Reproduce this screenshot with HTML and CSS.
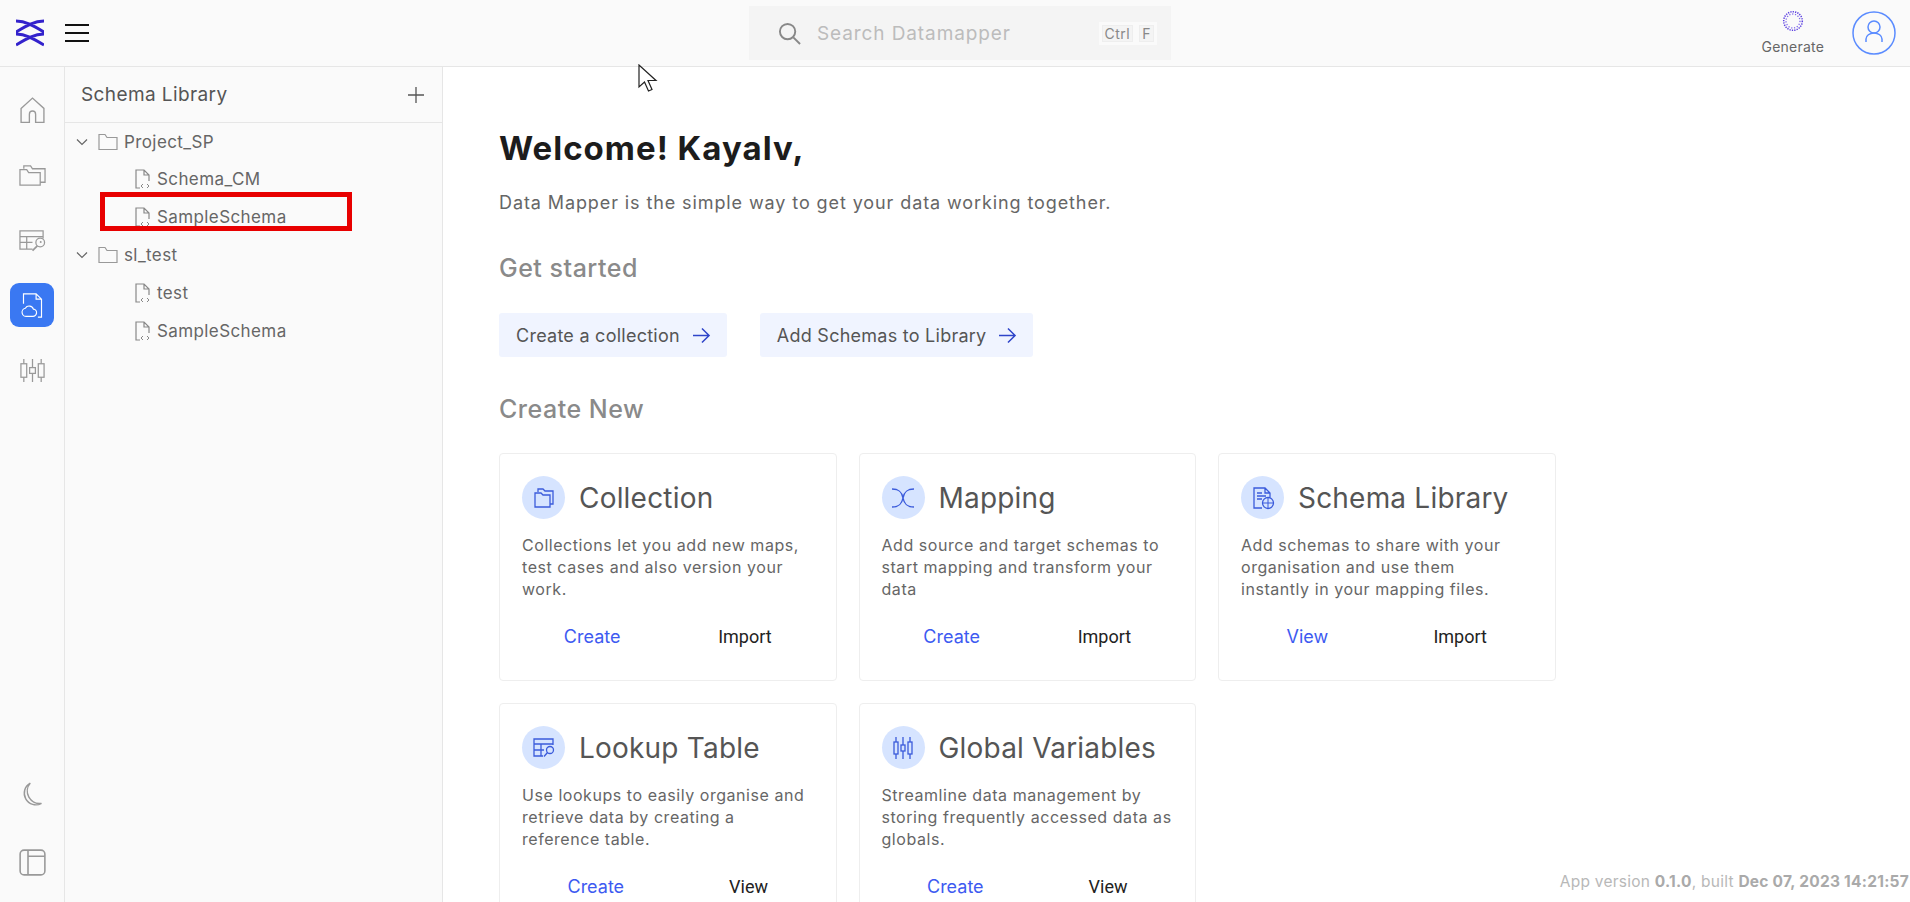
FILE: index.html
```html
<!DOCTYPE html>
<html>
<head>
  <title>Data Mapper</title>
  <link rel="stylesheet" href="styles.css">
</head>
<body>
  <svg width="0" height="0" class="defs">
    <symbol id="file-code" viewBox="0 0 18 20">
      <path d="M6 19H2V1h8l5 5v6M10 1v5h5" fill="none" stroke="currentColor" stroke-width="1.2"/>
      <path d="M9 15l-2 2 2 2M13 15l2 2-2 2" fill="none" stroke="currentColor" stroke-width="1"/>
    </symbol>
    <symbol id="folder" viewBox="0 0 20 18">
      <path d="M1 3.5V16.5H19V4.5H9L7 1.5H1z" fill="none" stroke="currentColor" stroke-width="1.2"/>
    </symbol>
    <symbol id="chevron" viewBox="0 0 12 8">
      <path d="M1 1.5l5 5 5-5" fill="none" stroke="currentColor" stroke-width="1.2"/>
    </symbol>
    <symbol id="arrow" viewBox="0 0 20 18">
      <path d="M1 9h17M10.500 1.500L18 9l-7.500 7.500" fill="none" stroke="currentColor" stroke-width="1.600"/>
    </symbol>
  </svg>

  <header class="topbar">
    <div class="topbar-left">
      <svg class="logo" viewBox="0 0 28 28">
        <path d="M0 2c10 0 18 5 28 11M28 2C18 2 10 7 0 13M0 15c10 0 18 5 28 11M28 15c-10 0-18 5-28 11" fill="none" stroke="#3322cc" stroke-width="3"/>
      </svg>
      <div class="hamburger"><span></span><span></span><span></span></div>
    </div>
    <div class="search">
      <svg class="search-icon" viewBox="0 0 24 24">
        <circle cx="10" cy="10" r="8" fill="none" stroke="#888" stroke-width="2"/>
        <path d="M16 16l7 7" stroke="#888" stroke-width="2"/>
      </svg>
      <span class="search-text">Search Datamapper</span>
      <span class="keys"><kbd>Ctrl</kbd><kbd>F</kbd></span>
    </div>
    <div class="topbar-right">
      <div class="generate">
        <svg class="generate-icon" viewBox="0 0 22 22">
          <circle cx="11" cy="11" r="9.300" fill="none" stroke="#5b3fe0" stroke-width="1.500" stroke-dasharray="1.300 1.100"/>
          <circle cx="11" cy="11" r="7" fill="none" stroke="#7d66ea" stroke-width="1.300" stroke-dasharray="1.200 1.700"/>
        </svg>
        <span>Generate</span>
      </div>
      <svg class="avatar" viewBox="0 0 44 44">
        <circle cx="22" cy="22" r="21" fill="none" stroke="#5b8cff" stroke-width="1.500"/>
        <circle cx="22" cy="16" r="6" fill="none" stroke="#5b8cff" stroke-width="1.500"/>
        <path d="M14 31v-3a8 6 0 0 1 16 0v3" fill="none" stroke="#5b8cff" stroke-width="1.500"/>
      </svg>
    </div>
  </header>

  <div class="app">
    <nav class="rail">
      <div class="rail-top">
        <a class="rail-item">
          <svg viewBox="0 0 26 26"><path d="M2 11L13 1l11 10v13.500H16V16.500a3 3 0 0 0-6 0V24.500H2z" fill="none" stroke="currentColor" stroke-width="1.300"/></svg>
        </a>
        <a class="rail-item">
          <svg viewBox="0 0 28 22"><path d="M5 4V1h7l2 3h13v14h-5M1 5h7l2 3h12v13H1z" fill="none" stroke="currentColor" stroke-width="1.300"/></svg>
        </a>
        <a class="rail-item">
          <svg viewBox="0 0 28 22"><path d="M14 20H1V1h24v8M1 7h24M1 13h13M8 7v13" fill="none" stroke="currentColor" stroke-width="1.300"/><circle cx="22" cy="13" r="4.500" fill="none" stroke="currentColor" stroke-width="1.300"/><circle cx="22.500" cy="12.500" r="1" fill="currentColor"/><path d="M19 16.500l-5 5" stroke="currentColor" stroke-width="1.800"/></svg>
        </a>
        <a class="rail-item active">
          <svg viewBox="0 0 26 30"><path d="M3 13V2h14l6 6v20h-4M17 2v6h6" fill="none" stroke="#fff" stroke-width="1.300"/><path d="M7 27h6a4 4 0 0 0 1-8 5 5 0 0 0-9-1 4.500 4.500 0 0 0 2 9z" fill="none" stroke="#fff" stroke-width="1.300"/></svg>
        </a>
        <a class="rail-item">
          <svg viewBox="0 0 28 26"><g fill="none" stroke="currentColor" stroke-width="1.300"><path d="M5 1v5M5 20v5M14 1v9M14 16v9M23 1v5M23 20v5"/><rect x="2" y="6" width="6" height="14"/><rect x="11" y="10" width="6" height="6"/><rect x="20" y="6" width="6" height="14"/></g></svg>
        </a>
      </div>
      <div class="rail-bottom">
        <a class="rail-item">
          <svg viewBox="0 0 22 24"><path d="M9 1a11 11 0 0 0 10 18A10 10 0 1 1 9 1z" fill="none" stroke="currentColor" stroke-width="1.300"/></svg>
        </a>
        <a class="rail-item">
          <svg viewBox="0 0 24 24"><rect x="1" y="1" width="22" height="22" rx="3.500" fill="none" stroke="currentColor" stroke-width="1.400"/><path d="M8 1v22M8 6.500h15" fill="none" stroke="currentColor" stroke-width="1.400"/></svg>
        </a>
      </div>
    </nav>

    <aside class="panel">
      <div class="panel-head">
        <span>Schema Library</span>
        <svg class="plus" viewBox="0 0 18 18"><path d="M9 1v16M1 9h16" stroke="#555" stroke-width="1.300"/></svg>
      </div>
      <ul class="tree">
        <li class="tree-row folder-row first-row"><svg class="chev"><use href="#chevron"/></svg><svg class="ic-folder"><use href="#folder"/></svg>Project_SP</li>
        <li class="tree-row file-row"><svg class="ic-file"><use href="#file-code"/></svg>Schema_CM</li>
        <li class="tree-row file-row"><svg class="ic-file"><use href="#file-code"/></svg>SampleSchema</li>
        <li class="tree-row folder-row"><svg class="chev"><use href="#chevron"/></svg><svg class="ic-folder"><use href="#folder"/></svg>sl_test</li>
        <li class="tree-row file-row"><svg class="ic-file"><use href="#file-code"/></svg>test</li>
        <li class="tree-row file-row"><svg class="ic-file"><use href="#file-code"/></svg>SampleSchema</li>
      </ul>
      <div class="highlight"></div>
    </aside>

    <main class="main">
      <h1>Welcome! Kayalv,</h1>
      <p class="lead">Data Mapper is the simple way to get your data working together.</p>

      <h2>Get started</h2>
      <div class="quick">
        <a class="quick-btn">Create a collection <svg><use href="#arrow"/></svg></a>
        <a class="quick-btn">Add Schemas to Library <svg><use href="#arrow"/></svg></a>
      </div>

      <h2 class="second">Create New</h2>
      <div class="cards">
        <section class="card">
          <div class="card-head">
            <span class="card-icon"><svg viewBox="0 0 24 24"><path d="M6 6V3h5l2 2h8v13h-3M3 7h6l2 2h7v12H3z" fill="none" stroke="currentColor" stroke-width="1.300"/></svg></span>
            <h3>Collection</h3>
          </div>
          <p>Collections let you add new maps, test cases and also version your work.</p>
          <div class="actions"><a class="primary">Create</a><a>Import</a></div>
        </section>
        <section class="card">
          <div class="card-head">
            <span class="card-icon"><svg viewBox="0 0 24 24"><path d="M1 3c8 0 10 4 11 9s3 9 11 9M23 3c-8 0-10 4-11 9s-3 9-11 9" fill="none" stroke="currentColor" stroke-width="1.300"/></svg></span>
            <h3>Mapping</h3>
          </div>
          <p>Add source and target schemas to start mapping and transform your data</p>
          <div class="actions"><a class="primary">Create</a><a>Import</a></div>
        </section>
        <section class="card">
          <div class="card-head">
            <span class="card-icon"><svg viewBox="0 0 24 24"><path d="M11 22H3V2h11l5 5v4M14 2v5h5M6 7h5M6 10h9M6 13h5" fill="none" stroke="currentColor" stroke-width="1.300"/><circle cx="17" cy="17" r="5.500" fill="none" stroke="currentColor" stroke-width="1.300"/><path d="M11.500 17h11M17 11.500v11" stroke="currentColor" stroke-width="1"/></svg></span>
            <h3>Schema Library</h3>
          </div>
          <p>Add schemas to share with your organisation and use them<br>instantly in your mapping files.</p>
          <div class="actions"><a class="primary">View</a><a>Import</a></div>
        </section>
        <section class="card">
          <div class="card-head">
            <span class="card-icon"><svg viewBox="0 0 24 24"><path d="M11 20H2V3h19v6M2 8h19M2 14h10M9 8v12" fill="none" stroke="currentColor" stroke-width="1.300"/><circle cx="18" cy="14" r="3.500" fill="none" stroke="currentColor" stroke-width="1.300"/><path d="M15.500 16.500L12 20.500" stroke="currentColor" stroke-width="1.300"/></svg></span>
            <h3>Lookup Table</h3>
          </div>
          <p>Use lookups to easily organise and retrieve data by creating a reference table.</p>
          <div class="actions"><a class="primary">Create</a><a>View</a></div>
        </section>
        <section class="card">
          <div class="card-head">
            <span class="card-icon"><svg viewBox="0 0 24 24"><g fill="none" stroke="currentColor" stroke-width="1.300"><path d="M5 1v5M5 18v5M12 1v8M12 15v8M19 1v5M19 18v5"/><rect x="3" y="6" width="4" height="12"/><rect x="10" y="9" width="4" height="6"/><rect x="17" y="6" width="4" height="12"/></g></svg></span>
            <h3>Global Variables</h3>
          </div>
          <p>Streamline data management by storing frequently accessed data as globals.</p>
          <div class="actions"><a class="primary">Create</a><a>View</a></div>
        </section>
      </div>
    </main>
  </div>

  <div class="version">App version <b>0.1.0</b>, built <b>Dec 07, 2023 14:21:57</b></div>

  <svg class="pointer" viewBox="0 0 20 28">
    <path d="M1 1v22l5.500-5 4 9 3.500-1.500-4-9H18z" fill="#fff" stroke="#222" stroke-width="1.200"/>
  </svg>
</body>
</html>
```

FILE: styles.css
```css
* {
  box-sizing: border-box;
}

html, body {
  height: 100%;
}

body {
  margin: 0;
  overflow: hidden;
  font-family: "Inter", "Open Sans", sans-serif;
  color: #555;
  background-color: #fff;
}

.defs {
  position: absolute;
}

/* top bar */
.topbar {
  height: 67px;
  display: grid;
  grid-template-columns: 749px 422px 1fr;
  align-items: center;
  background-color: #fafafa;
  border-bottom: 1px solid #e6e6e6;
  padding-right: 14px;
}

.topbar-left {
  display: flex;
  align-items: center;
  gap: 21px;
  padding-left: 16px;
}

.logo {
  width: 28px;
  height: 28px;
}

.hamburger {
  width: 24px;
  display: flex;
  flex-direction: column;
  gap: 6px;
}

.hamburger span {
  display: block;
  height: 2px;
  background-color: #111;
}

.search {
  height: 54px;
  width: 422px;
  display: flex;
  align-items: center;
  padding-left: 29px;
  background-color: #f4f4f4;
}

.search-icon {
  width: 23px;
  height: 23px;
}

.search-text {
  margin-left: 16px;
  font-size: 19px;
  color: #bcbcbc;
  letter-spacing: 0.9px;
}

.keys {
  margin-left: auto;
  margin-right: 14px;
  display: flex;
  gap: 6px;
  padding: 3px;
  background-color: #fafafa;
}

kbd {
  font-family: inherit;
  font-size: 14px;
  line-height: 15px;
  padding: 0 2px;
  letter-spacing: 0.5px;
  color: #888;
  background-color: #f4f4f4;
  border: 1px solid #eee;
}

.topbar-right {
  display: flex;
  align-items: center;
  justify-content: flex-end;
  gap: 28px;
}

.generate {
  display: flex;
  flex-direction: column;
  align-items: center;
  gap: 6px;
  padding-bottom: 2px;
  font-size: 14px;
  letter-spacing: 0.2px;
  color: #666;
}

.generate-icon {
  width: 22px;
  height: 22px;
}

.avatar {
  width: 44px;
  height: 44px;
}

/* main layout */
.app {
  display: flex;
  height: 835px;
}

.rail {
  width: 65px;
  flex: none;
  display: flex;
  flex-direction: column;
  justify-content: space-between;
  background-color: #fafafa;
  border-right: 1px solid #e6e6e6;
  padding: 21px 0 18px;
}

.rail-top,
.rail-bottom {
  display: flex;
  flex-direction: column;
  align-items: center;
}

.rail-top {
  gap: 21px;
}

.rail-bottom {
  gap: 23px;
}

.rail-item {
  width: 44px;
  height: 44px;
  display: flex;
  align-items: center;
  justify-content: center;
  color: #999;
  border-radius: 9px;
}

.rail-item svg {
  width: 27px;
  height: 27px;
}

.rail-item.active {
  background-color: #3a78f2;
}

.panel {
  position: relative;
  width: 378px;
  flex: none;
  background-color: #fafafa;
  border-right: 1px solid #e6e6e6;
}

.panel-head {
  height: 56px;
  display: flex;
  align-items: center;
  justify-content: space-between;
  padding: 0 17px 0 16px;
  font-size: 19px;
  letter-spacing: 0.4px;
  color: #555;
  border-bottom: 1px solid #e6e6e6;
}

.plus {
  width: 18px;
  height: 18px;
}

.tree {
  list-style: none;
  margin: 0;
  padding: 0;
}

.tree-row {
  height: 38px;
  display: flex;
  align-items: center;
  font-size: 17px;
  letter-spacing: 0.4px;
  color: #666;
}

.first-row {
  height: 37px;
}

.folder-row {
  padding-left: 11px;
}

.file-row {
  padding-left: 69px;
}

.chev {
  width: 12px;
  height: 8px;
  color: #666;
  margin-right: 10px;
}

.ic-folder {
  width: 20px;
  height: 18px;
  color: #999;
  margin-right: 6px;
}

.ic-file {
  width: 18px;
  height: 20px;
  color: #888;
  margin-right: 5px;
}

.highlight {
  position: absolute;
  left: 35px;
  top: 125px;
  width: 252px;
  height: 39px;
  border: 5px solid #e80000;
}

/* welcome content */
.main {
  flex: 1;
  overflow: hidden;
  padding: 57px 0 0 56px;
}

h1 {
  margin: 0;
  font-size: 33px;
  line-height: 48px;
  font-weight: 700;
  letter-spacing: 1px;
  color: #1c1c1c;
}

.lead {
  margin: 17px 0 0;
  font-size: 18px;
  line-height: 28px;
  color: #666;
  letter-spacing: 0.9px;
}

h2 {
  margin: 33px 0 0;
  font-size: 25px;
  line-height: 36px;
  font-weight: 500;
  letter-spacing: 0.5px;
  color: #8a8a8a;
}

h2.second {
  margin-top: 34px;
}

.quick {
  display: flex;
  gap: 33px;
  margin-top: 27px;
}

.quick-btn {
  height: 44px;
  display: flex;
  align-items: center;
  gap: 12px;
  padding: 0 16px 0 17px;
  font-size: 18px;
  letter-spacing: 0.25px;
  color: #555;
  background-color: #f0f4ff;
  border-radius: 3px;
}

.quick-btn svg {
  width: 19px;
  height: 17px;
  color: #2f45c9;
}

.cards {
  display: grid;
  grid-template-columns: repeat(3, 337.5px);
  grid-auto-rows: 228px;
  gap: 22px;
  margin-top: 26px;
}

.card {
  padding: 22px;
  border: 1px solid #eee;
  border-radius: 4px;
}

.card-head {
  display: flex;
  align-items: center;
  gap: 14px;
}

.card-icon {
  width: 43px;
  height: 43px;
  flex: none;
  display: flex;
  align-items: center;
  justify-content: center;
  border-radius: 50%;
  color: #3b5bdb;
  background-color: #d6e4ff;
}

.card-icon svg {
  width: 24px;
  height: 24px;
}

h3 {
  margin: 0;
  font-size: 28px;
  font-weight: 400;
  letter-spacing: 0.2px;
  color: #555;
}

.card p {
  margin: 15px 0 0;
  height: 66px;
  font-size: 16px;
  line-height: 22px;
  letter-spacing: 0.55px;
  color: #666;
}

.actions {
  display: flex;
  justify-content: space-around;
  margin: 26px -7px 0;
  font-family: "Roboto", sans-serif;
  font-size: 18px;
  color: #222;
}

.actions .primary {
  font-family: "Inter", sans-serif;
  color: #3d5af1;
}

/* overlays */
.version {
  position: absolute;
  right: 1px;
  bottom: 11px;
  font-size: 15.5px;
  letter-spacing: 0.25px;
  color: #b8b8b8;
  background-color: #fff;
}

.version b {
  color: #aaa;
}

.pointer {
  position: absolute;
  left: 638px;
  top: 64px;
  width: 20px;
  height: 28px;
}
```
